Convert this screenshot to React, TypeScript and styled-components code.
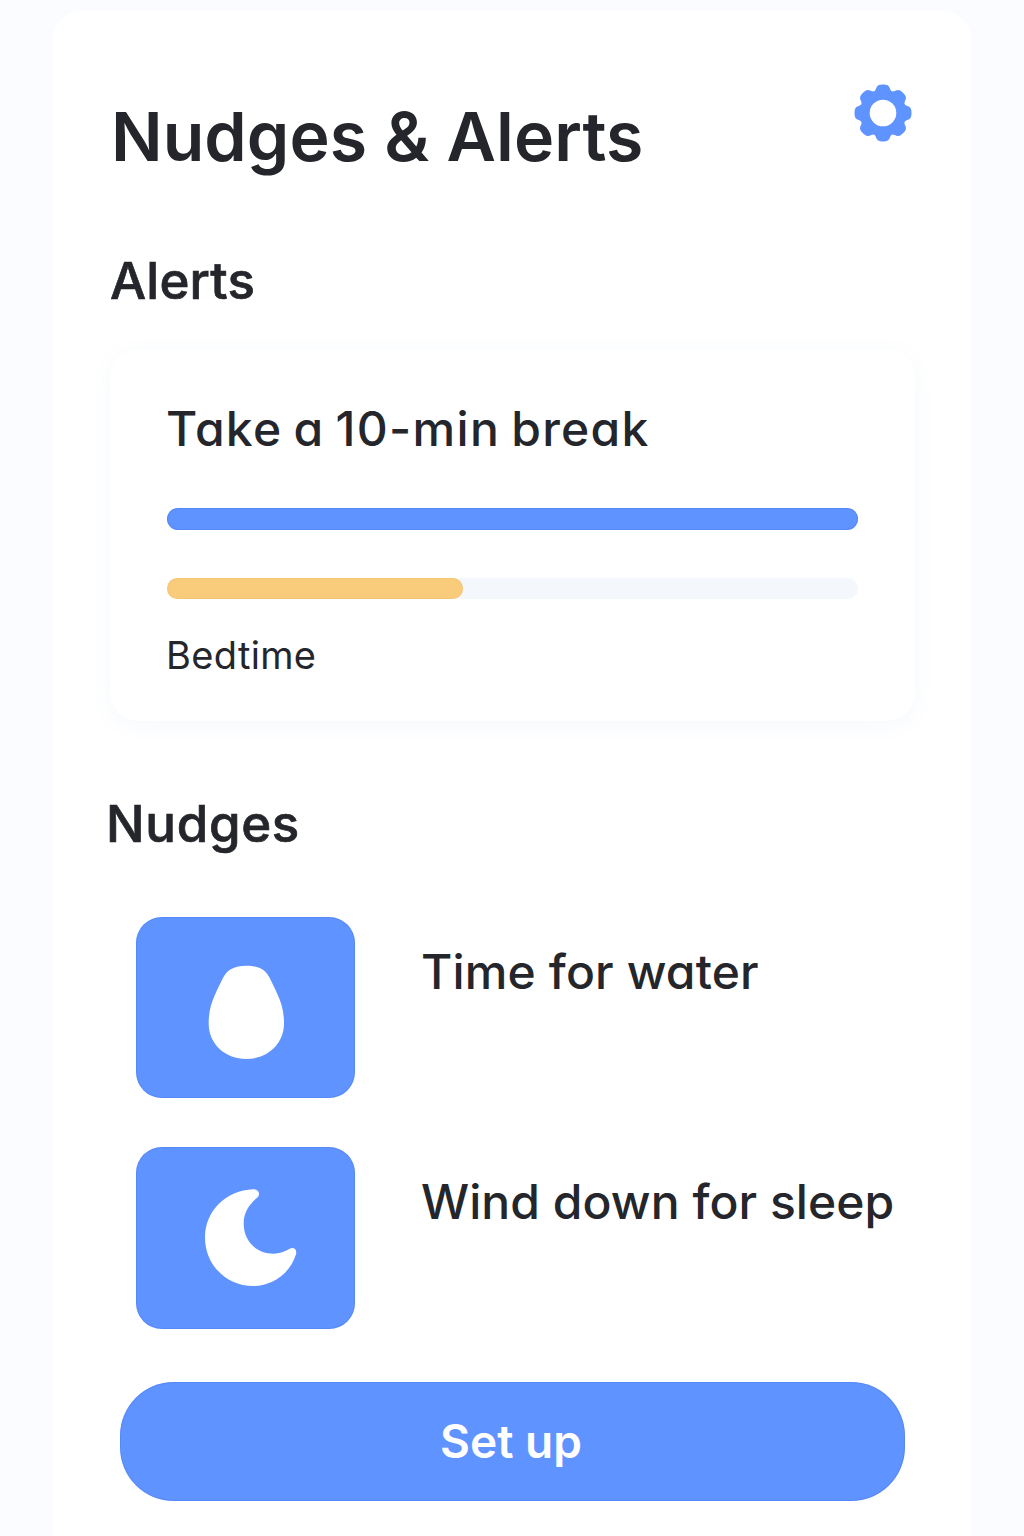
import React from "react";
import styled, { createGlobalStyle } from "styled-components";

const blue = "#5f93ff";
const ink = "#24262b";

const GlobalStyle = createGlobalStyle`
  * { box-sizing: border-box; }
  body {
    margin: 0;
    background: #fbfcff;
    color: ${ink};
    font-family: Inter, "Open Sans", sans-serif;
    font-feature-settings: "cv11";
  }
`;

const Screen = styled.div`
  width: 1024px;
  height: 1536px;
  padding: 11px 53px 0;
  overflow: hidden;
`;

const Panel = styled.main`
  display: flex;
  flex-direction: column;
  height: 1525px;
  padding: 73px 56px 0 57px;
  border-radius: 28px 28px 0 0;
  background: #fff;
`;

const Header = styled.header`
  display: flex;
  justify-content: space-between;
  align-items: flex-start;
  height: 172px;
  padding-right: 3px;
`;

const Title = styled.h1`
  margin: 18px 0 0 1px;
  font-size: 68px;
  line-height: 68px;
  font-weight: 600;
  letter-spacing: 0.05px;
  white-space: nowrap;
`;

const IconButton = styled.button`
  display: flex;
  padding: 0;
  border: 0;
  background: none;
`;

const SectionTitle = styled.h2<{ $shift?: number; $spacing?: number }>`
  margin: 0 0 0 ${(p) => p.$shift ?? 0}px;
  font-size: 51px;
  line-height: 50px;
  font-weight: 500;
  -webkit-text-stroke: 0.7px ${ink};
  letter-spacing: ${(p) => p.$spacing ?? 0}px;
`;

const AlertCard = styled.section`
  display: flex;
  flex-direction: column;
  width: 805px;
  height: 372px;
  margin: 43px 0 78px;
  padding: 56px 57px 0;
  border-radius: 28px;
  background: #fff;
  box-shadow: 0 4px 20px rgba(90, 130, 210, 0.06);
`;

const ItemTitle = styled.h3<{ $spacing: number; $wordSpacing?: number }>`
  margin: 0 0 0 -1px;
  font-size: 48px;
  line-height: 47px;
  font-weight: 500;
  letter-spacing: ${(p) => p.$spacing}px;
  word-spacing: ${(p) => p.$wordSpacing ?? 0}px;
  white-space: nowrap;
`;

const Track = styled.div<{ $height: number; $gap: number }>`
  height: ${(p) => p.$height}px;
  margin-top: ${(p) => p.$gap}px;
  border-radius: 11px;
  background: #f4f7fb;
`;

const Fill = styled.div<{ $color: string; $edge: string }>`
  height: 100%;
  border-radius: 11px;
  background: ${(p) => p.$color};
  box-shadow: inset 0 0 0 1px ${(p) => p.$edge};
`;

const Caption = styled.p`
  margin: 38px 0 0 -1px;
  font-size: 38px;
  line-height: 36px;
  letter-spacing: 0.35px;
`;

const NudgeList = styled.ul`
  display: flex;
  flex-direction: column;
  gap: 49px;
  margin: 68px 0 0;
  padding: 0 0 0 26px;
  list-style: none;
`;

const NudgeRow = styled.li`
  display: flex;
  align-items: flex-start;
  gap: 67px;

  h3 { margin-top: 31px; }
`;

const Tile = styled.div<{ $height: number }>`
  display: flex;
  width: 219px;
  height: ${(p) => p.$height}px;
  border-radius: 26px;
  background: ${blue};
  box-shadow: inset 0 0 0 1px rgba(55, 105, 225, 0.22);
`;

const SetupButton = styled.button`
  width: 785px;
  height: 119px;
  margin: 53px 0 0 10px;
  padding: 0 3px 2px 0;
  border: 0;
  border-radius: 54px;
  background: ${blue};
  box-shadow: inset 0 0 0 1px rgba(55, 105, 225, 0.25);
  color: #fff;
  font: 600 46px/46px Inter, "Open Sans", sans-serif;
  letter-spacing: 0;
`;

type Point = [number, number];

/* Closed polygon outline whose corners are softened by quadratic curves. */
function roundedOutline(points: Point[], softness: number) {
  const n = points.length;
  const toward = (a: Point, b: Point): Point => [
    a[0] + (b[0] - a[0]) * softness,
    a[1] + (b[1] - a[1]) * softness,
  ];
  const fmt = (p: Point) => `${p[0].toFixed(2)} ${p[1].toFixed(2)}`;
  return (
    points
      .map((p, i) => {
        const before = toward(p, points[(i + n - 1) % n]);
        const after = toward(p, points[(i + 1) % n]);
        return `${i === 0 ? "M" : "L"}${fmt(before)} Q${fmt(p)} ${fmt(after)}`;
      })
      .join(" ") + "Z"
  );
}

const gearPoints: Point[] = Array.from({ length: 8 }).flatMap((_, k) =>
  ([[-11, 29], [11, 29], [22.5, 22]] as Point[]).map(([deg, r]): Point => {
    const a = ((k * 45 + deg - 90) * Math.PI) / 180;
    return [29 + r * Math.cos(a), 29 + r * Math.sin(a)];
  })
);

const GearIcon = () => (
  <svg width="58" height="58" viewBox="0 0 58 58" fill={blue}>
    <path
      fillRule="evenodd"
      d={`${roundedOutline(gearPoints, 0.42)} M29 15.7a13.3 13.3 0 1 0 0 26.6a13.3 13.3 0 1 0 0-26.6Z`}
    />
  </svg>
);

const DropIcon = () => (
  <svg width="219" height="181" viewBox="-162 -99 657 543" fill="#fff">
    <path d="M169 47C205 47 226 59 238 82C246 98 254 114 263 134C275 160 282 185 282 220C282 285 230 327 169 327C108 327 56 285 56 220C56 185 63 160 75 134C84 114 92 98 100 82C112 59 133 47 169 47Z" />
  </svg>
);

const MoonIcon = () => (
  <svg width="219" height="181" viewBox="-162 -84 657 543" fill="#fff">
    <path d="M190 43C205 42 212 56 203 67C180 86 161 110 161 145C161 200 200 236 250 236C270 236 284 230 298 222C311 214 322 224 318 238C302 292 250 333 190 333C108 333 45 268 45 188C45 108 108 46 190 43Z" />
  </svg>
);

export default function App() {
  return (
    <Screen>
      <GlobalStyle />
      <Panel>
        <Header>
          <Title>Nudges &amp; Alerts</Title>
          <IconButton aria-label="Settings">
            <GearIcon />
          </IconButton>
        </Header>

        <SectionTitle $spacing={0.2}>Alerts</SectionTitle>
        <AlertCard>
          <ItemTitle $spacing={1.3} $wordSpacing={-3}>
            Take a 10-min break
          </ItemTitle>
          <Track $height={22} $gap={56}>
            <Fill $color={blue} $edge="rgba(55, 105, 225, 0.25)" />
          </Track>
          <Track $height={21} $gap={48}>
            <Fill $color="#f9cc7c" $edge="rgba(235, 170, 70, 0.2)" style={{ width: "42.9%" }} />
          </Track>
          <Caption>Bedtime</Caption>
        </AlertCard>

        <SectionTitle $shift={-4} $spacing={0.7}>
          Nudges
        </SectionTitle>
        <NudgeList>
          <NudgeRow>
            <Tile $height={181}>
              <DropIcon />
            </Tile>
            <ItemTitle $spacing={0.15}>Time for water</ItemTitle>
          </NudgeRow>
          <NudgeRow>
            <Tile $height={182}>
              <MoonIcon />
            </Tile>
            <ItemTitle $spacing={0.05}>Wind down for sleep</ItemTitle>
          </NudgeRow>
        </NudgeList>

        <SetupButton>Set up</SetupButton>
      </Panel>
    </Screen>
  );
}
